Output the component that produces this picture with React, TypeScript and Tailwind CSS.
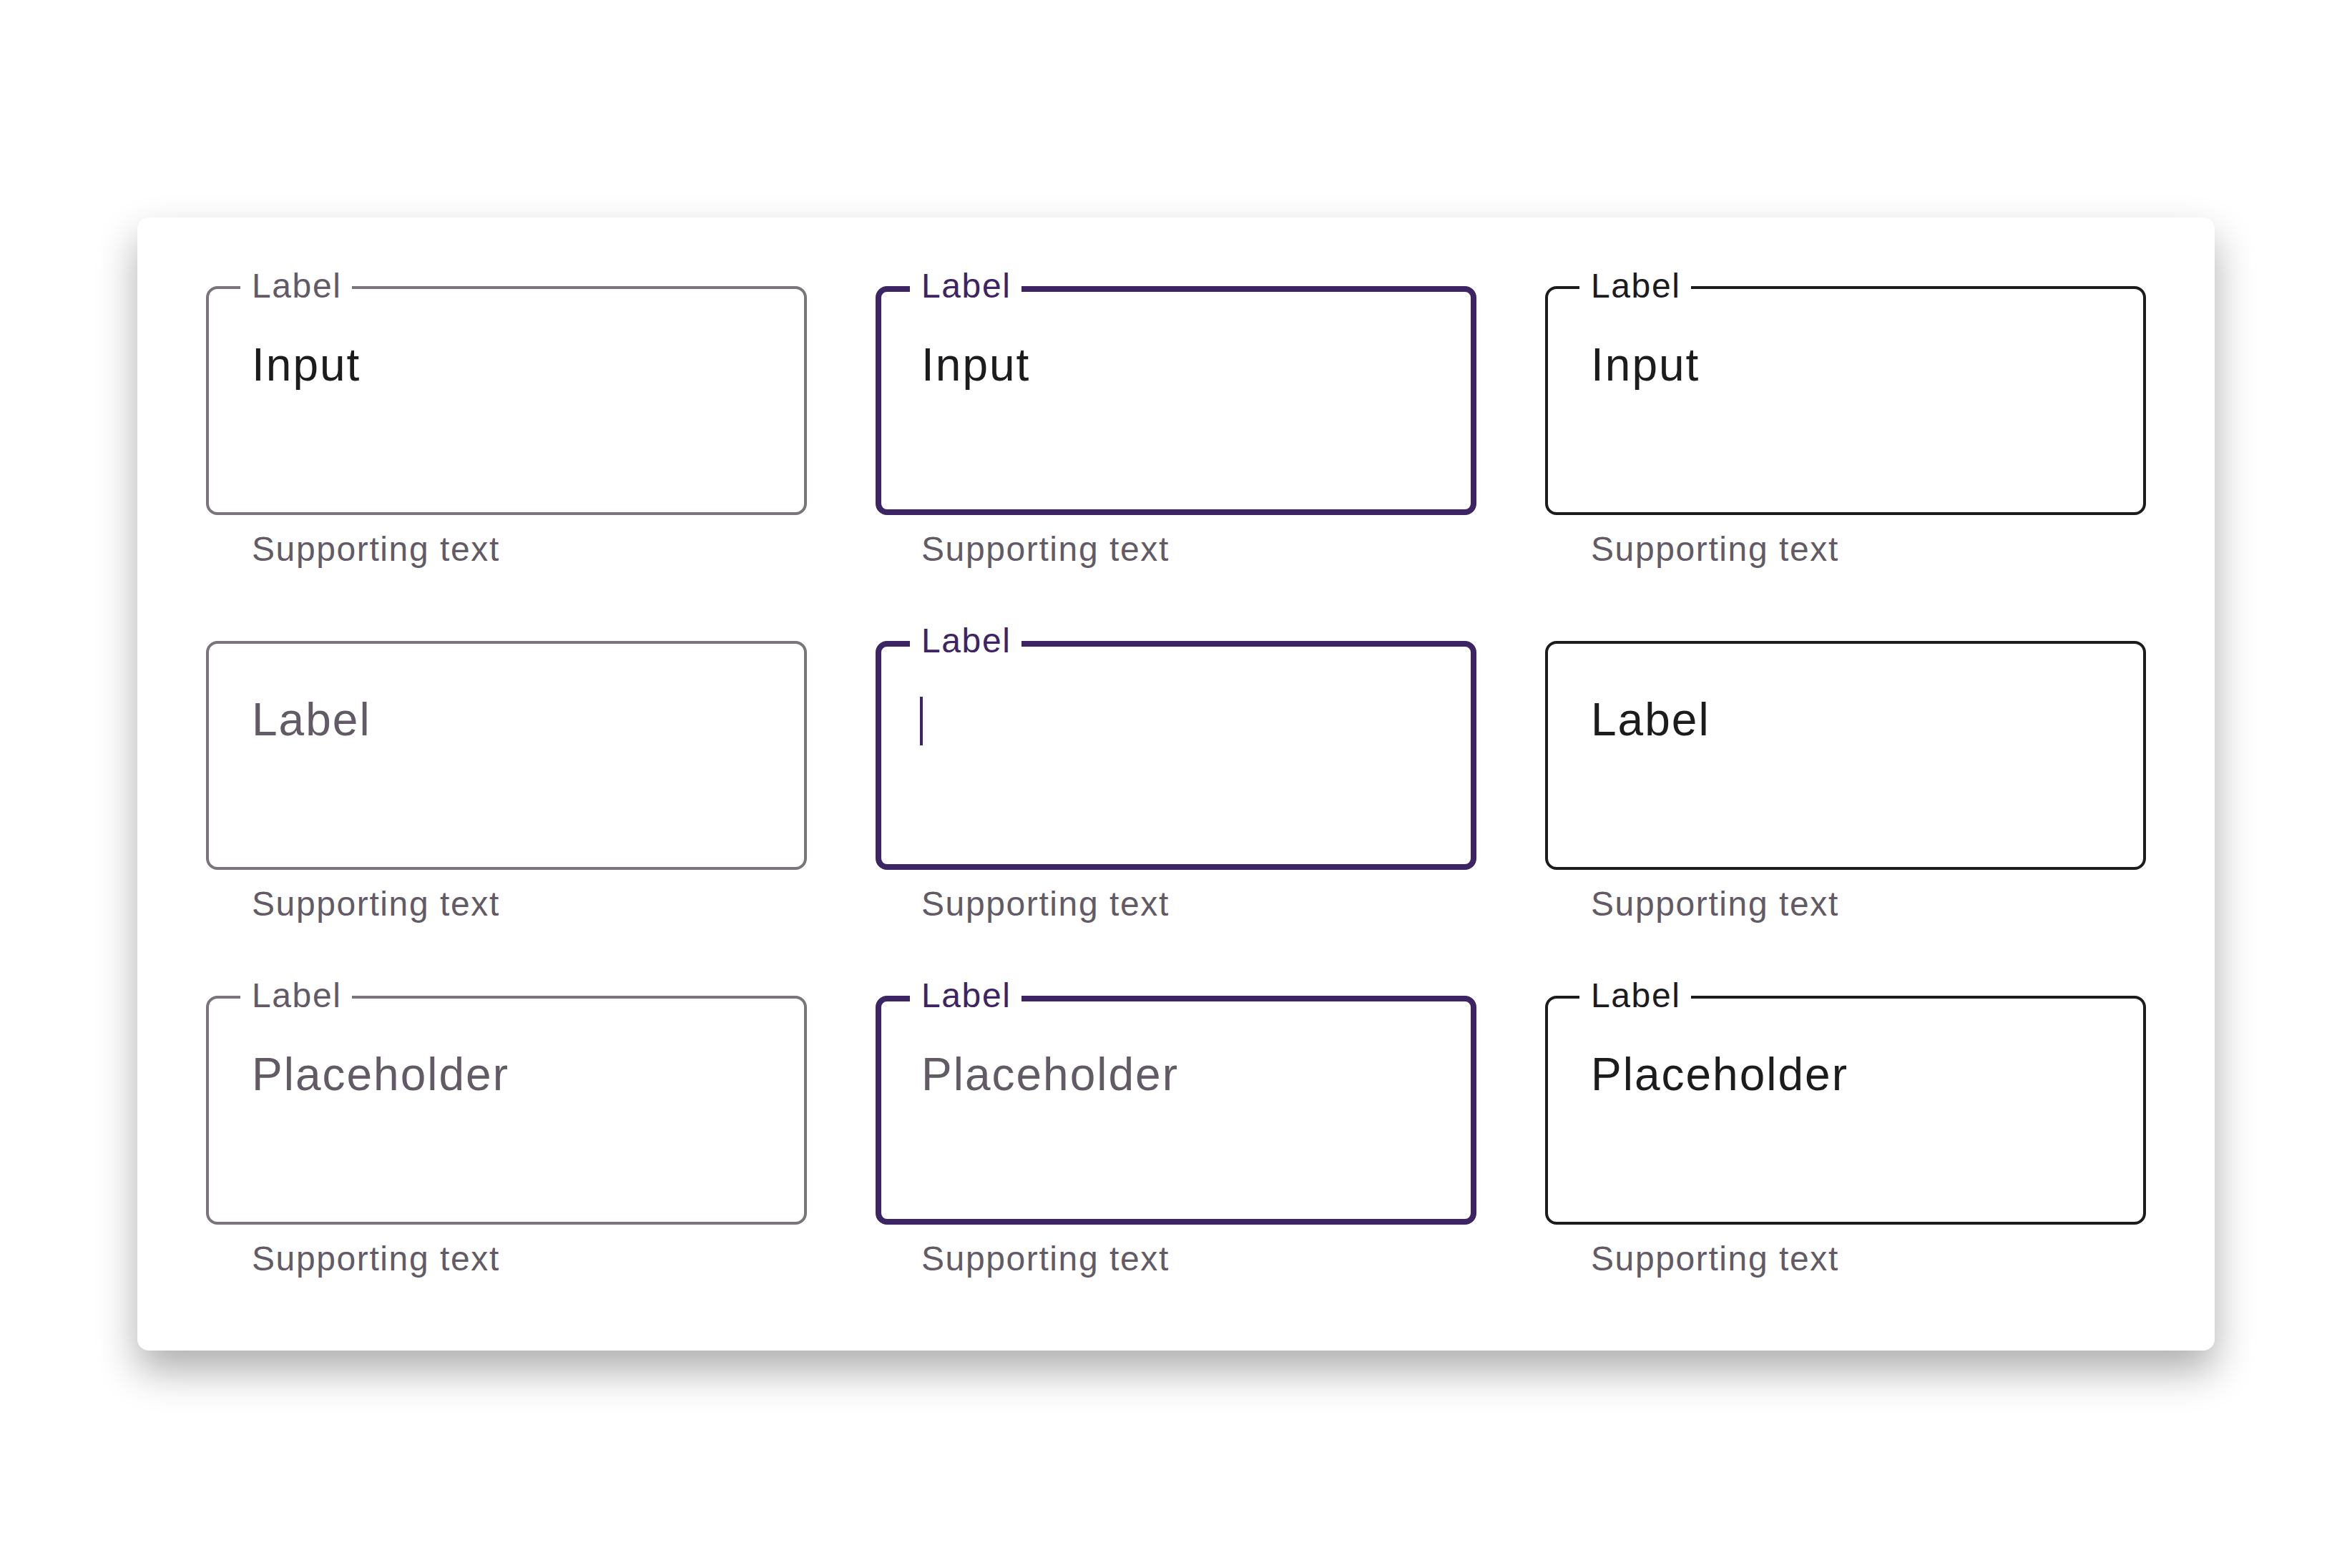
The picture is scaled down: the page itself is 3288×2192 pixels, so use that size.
import clsx from "clsx";

type Variant = "enabled" | "focused" | "hovered";

type Field = {
    label?: string;
    value?: string;
    muted?: boolean;
    caret?: boolean;
}

const variants: Variant[] = ["enabled", "focused", "hovered"];

const rows: Record<Variant, Field>[] = [
    {
        enabled: { label: "Label", value: "Input" },
        focused: { label: "Label", value: "Input" },
        hovered: { label: "Label", value: "Input" },
    },
    {
        enabled: { value: "Label", muted: true },
        focused: { label: "Label", caret: true },
        hovered: { value: "Label" },
    },
    {
        enabled: { label: "Label", value: "Placeholder", muted: true },
        focused: { label: "Label", value: "Placeholder", muted: true },
        hovered: { label: "Label", value: "Placeholder" },
    },
]

const borders = {
    enabled: "border-4 border-[#7a757a]",
    focused: "border-8 border-[#3d2462]",
    hovered: "border-4 border-[#1c1b1e]",
}

const labels = {
    enabled: "text-[#625b66]",
    focused: "text-[#3d2462]",
    hovered: "text-[#1c1b1e]",
}

function TextArea({ variant, field }: { variant: Variant; field: Field }) {
    return (
        <div className="flex flex-col">
            <div className="relative h-[320px]">
                <div className={clsx("absolute inset-0 rounded-[16px]", borders[variant])} />
                {field.label && (
                    <span className={clsx("absolute left-12 -top-8 w-[156px] bg-white pl-4 text-[48px] leading-[64px] tracking-[1.6px]", labels[variant])}>
                        {field.label}
                    </span>
                )}
                {field.value && (
                    <p className={clsx("relative px-16 pt-[62px] text-[64px] leading-[96px] tracking-[2px]", field.muted ? "text-[#625b66]" : "text-[#1c1b1e]")}>
                        {field.value}
                    </p>
                )}
                {field.caret && (
                    <div className="relative ml-[62px] pt-[78px]">
                        <div className="h-[68px] w-1 bg-[#3d2462]" />
                    </div>
                )}
            </div>
            <p className="px-16 pt-4 text-[48px] leading-[64px] tracking-[1.6px] text-[#625b66]">Supporting text</p>
        </div>
    )
}

export default function App() {
    return (
        <main className="flex h-[2192px] w-[3288px] items-center justify-center bg-white font-['Liberation_Sans',Arial,sans-serif]">
            <div className="grid h-[1584px] w-[2904px] grid-cols-3 content-start gap-24 rounded-[16px] bg-white p-24 shadow-[0_28px_56px_rgba(0,0,0,0.32)]">
                {rows.map((row, i) =>
                    variants.map((variant) => (
                        <TextArea key={variant + i} variant={variant} field={row[variant]} />
                    ))
                )}
            </div>
        </main>
    )
}
